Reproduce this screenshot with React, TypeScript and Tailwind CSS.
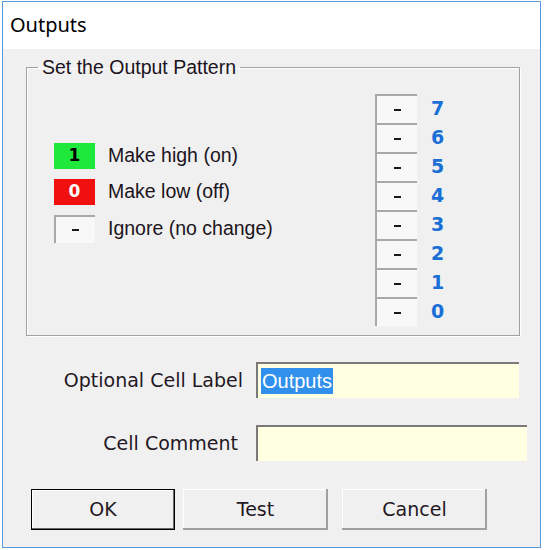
import React from "react";

const bits = [7, 6, 5, 4, 3, 2, 1, 0];

function Dash() {
  return <span className="block h-[2px] w-[7px] bg-[#1a1a1a]" />;
}

function LegendRow({ box, label }: { box: React.ReactNode; label: string }) {
  return (
    <div className="flex items-center gap-[13px]">
      {box}
      <span className="text-[19.5px] leading-none text-[#1c1420]">{label}</span>
    </div>
  );
}

export default function App() {
  return (
    <div className="h-[550px] w-[544px] bg-white pt-[1px] pl-[2px] font-['Liberation_Sans',Arial,sans-serif]">
      <div className="flex h-[547px] w-[539px] flex-col border border-[#5a9ad8] bg-[#f0f0f0]">
        <div className="flex h-[47px] items-center bg-white pl-[7px] pb-[2px] font-['Noto_Sans',sans-serif] text-[20px] text-black">
          Outputs
        </div>

        <fieldset className="mt-[9px] ml-[23px] h-[278px] w-[494px] border border-[#a2a2a2] shadow-[inset_1px_1px_0_#ffffff,1px_1px_0_#ffffff]">
          <legend className="ml-[11px] px-[4px] text-[19.5px] leading-[18px] text-[#1c1420]">
            Set the Output Pattern
          </legend>
          <div className="flex">
            <div className="flex flex-1 flex-col gap-[10px] pt-[67px] pl-[27px]">
              <LegendRow
                box={
                  <div className="flex h-[26px] w-[41px] items-center justify-center bg-[#1fe83d] font-['DejaVu_Sans',sans-serif] text-[17px] font-bold text-black">
                    1
                  </div>
                }
                label="Make high (on)"
              />
              <LegendRow
                box={
                  <div className="flex h-[26px] w-[41px] items-center justify-center bg-[#f01010] font-['DejaVu_Sans',sans-serif] text-[17px] font-bold text-white">
                    0
                  </div>
                }
                label="Make low (off)"
              />
              <LegendRow
                box={
                  <div className="flex h-[28px] w-[41px] items-center justify-center border-t-2 border-l-2 border-[#a8a8a8] bg-[#f8f8f8]">
                    <Dash />
                  </div>
                }
                label="Ignore (no change)"
              />
            </div>
            <div className="mr-[64px] flex flex-col pt-[18px]">
              {bits.map((b) => (
                <div key={b} className="flex h-[29px] items-center">
                  <div className="flex h-[29px] w-[42px] items-center justify-center border-t-2 border-l-2 border-[#a8a8a8] bg-[#f8f8f8]">
                    <Dash />
                  </div>
                  <div className="w-[38px] pl-[14px] font-['DejaVu_Sans',sans-serif] text-[19px] font-bold leading-none text-[#1a6fd6]">
                    {b}
                  </div>
                </div>
              ))}
            </div>
          </div>
        </fieldset>

        <div className="mt-[26px] flex items-center font-['DejaVu_Sans',Verdana,sans-serif] text-[19px] text-[#241824]">
          <span className="w-[240px] text-right">Optional Cell Label</span>
          <div className="ml-[13px] flex h-[36px] w-[263px] items-center border-t-2 border-l-2 border-[#7a7a7a] bg-[#ffffe1] pl-[3px] font-['Liberation_Sans',Arial,sans-serif] text-[20px]">
            <span className="bg-[#3090ec] px-[1px] leading-[26px] text-white">Outputs</span>
          </div>
        </div>

        <div className="mt-[27px] flex items-center font-['DejaVu_Sans',Verdana,sans-serif] text-[19px] text-[#241824]">
          <span className="w-[235px] text-right">Cell Comment</span>
          <div className="ml-[18px] h-[36px] w-[271px] border-t-2 border-l-2 border-[#7a7a7a] bg-[#ffffe1]" />
        </div>

        <div className="mt-[28px] ml-[28px] flex font-['DejaVu_Sans',Verdana,sans-serif] text-[19px] text-[#241824]">
          <button className="h-[41px] w-[144px] border border-black bg-[#f0f0f0] shadow-[inset_-1px_-1px_0_#696969,inset_1px_1px_0_#ffffff]">
            OK
          </button>
          <button className="ml-[8px] h-[41px] w-[145px] bg-[#f0f0f0] shadow-[inset_-2px_-2px_0_#a0a0a0,inset_1px_1px_0_#ffffff]">
            Test
          </button>
          <button className="ml-[14px] h-[41px] w-[145px] bg-[#f0f0f0] shadow-[inset_-2px_-2px_0_#a0a0a0,inset_1px_1px_0_#ffffff]">
            Cancel
          </button>
        </div>
      </div>
    </div>
  );
}
